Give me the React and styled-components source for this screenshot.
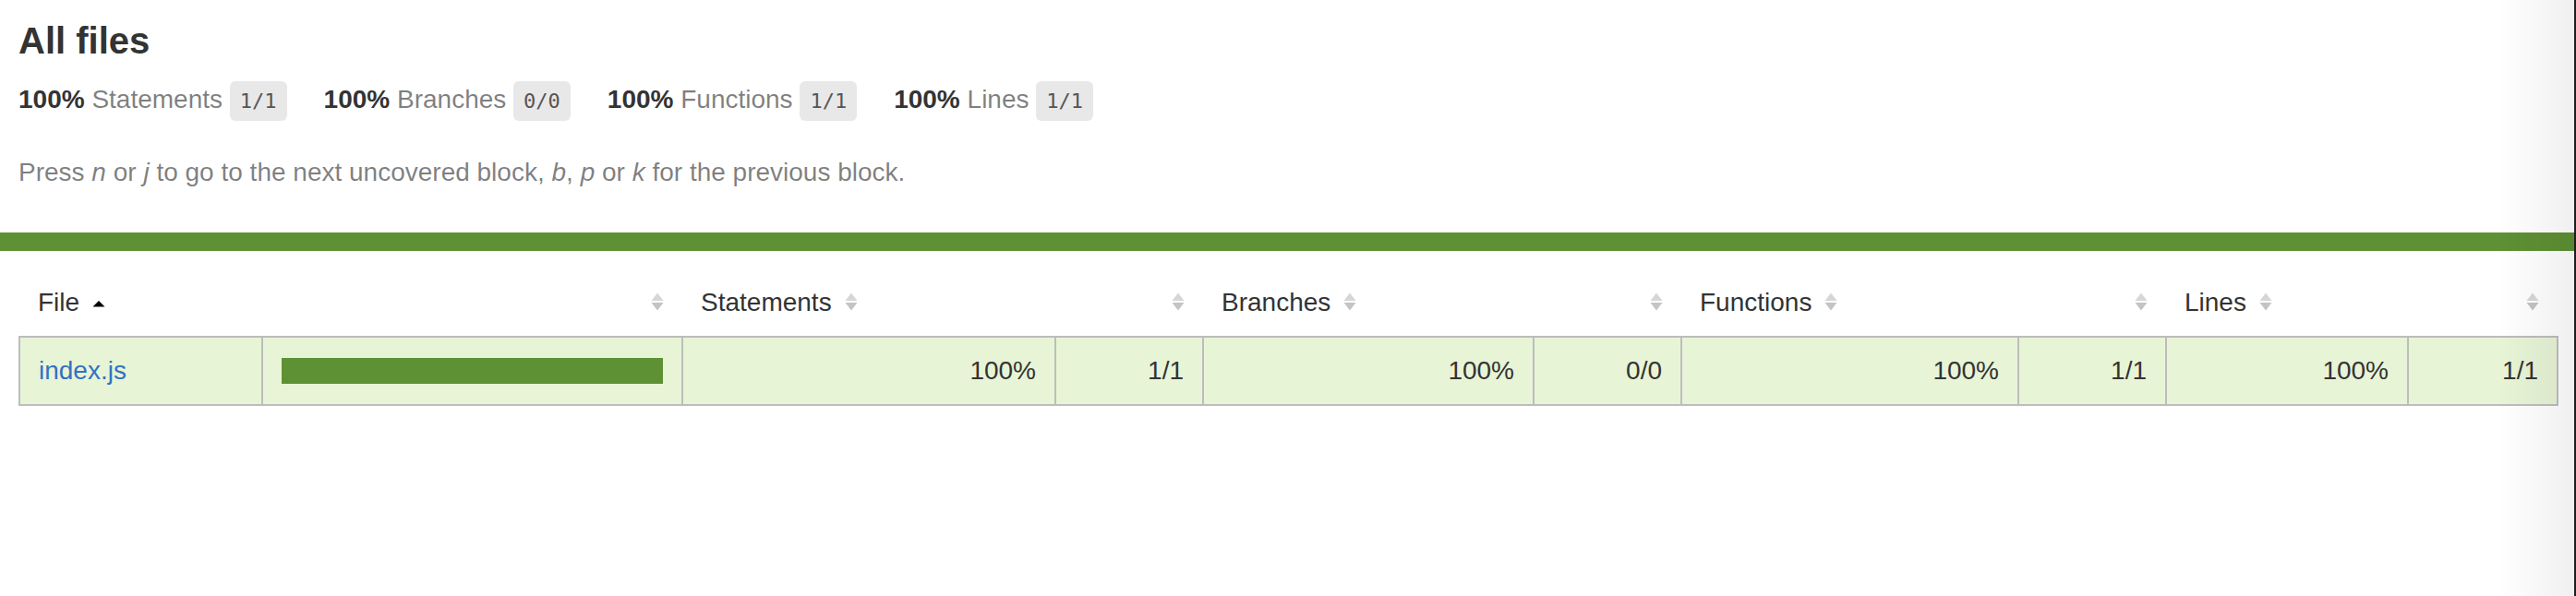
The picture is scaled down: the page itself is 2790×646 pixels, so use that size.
import React from "react";
import styled, { createGlobalStyle } from "styled-components";

const GREEN = "#5e9034";
const LIGHT = "#e8f4d6";
const LINE = "#bdbdbd";

const GlobalStyle = createGlobalStyle`
  *, *:before, *:after { box-sizing: border-box; }
  html, body { margin: 0; padding: 0; background: #fff; }
  body {
    font-family: "Liberation Sans", Arial, sans-serif;
    font-size: 28px;
    line-height: 1.2;
    color: #333;
  }
`;

const Wrapper = styled.div`
  min-height: 100vh;
`;

const Pad = styled.div`
  padding: 20px;
`;

const Title = styled.h1`
  font-size: 40px;
  line-height: 1.2;
  margin: 0;
  font-weight: bold;
`;

const StatRow = styled.div`
  display: flex;
`;

const Stat = styled.div`
  padding: 23px 40px 17px 0;
  white-space: nowrap;
`;

const Strong = styled.span`
  font-weight: bold;
`;

const Quiet = styled.span`
  color: rgba(0, 0, 0, 0.5);
`;

const Fraction = styled.span`
  display: inline-block;
  height: 43px;
  line-height: 43px;
  margin: -6px 0;
  padding: 0 11px;
  font-family: "DejaVu Sans Mono", "Liberation Mono", monospace;
  font-size: 22px;
  color: #555;
  background: #e8e8e8;
  border-radius: 6px;
  vertical-align: middle;
`;

const Hint = styled.p`
  margin: 28px 0;
  color: rgba(0, 0, 0, 0.5);
  em { font-style: italic; }
`;

const StatusLine = styled.div`
  height: 20px;
  background: ${GREEN};
`;

const Table = styled.table`
  width: 100%;
  border-collapse: collapse;
  table-layout: fixed;
  line-height: 32px;
  tbody { border: 2px solid ${LINE}; }
  tr { border-bottom: 2px solid ${LINE}; }
`;

const Col = styled.col`
  width: ${(p) => p.$w}px;
`;

const Th = styled.th`
  padding: 20px;
  font-weight: normal;
  white-space: nowrap;
  text-align: ${(p) => (p.$right ? "right" : "left")};
`;

const Td = styled.td`
  padding: 20px;
  background: ${LIGHT};
  border-right: 2px solid ${LINE};
  white-space: nowrap;
  text-align: ${(p) => (p.$right ? "right" : "left")};
  &:last-child { border-right: none; }
`;

const FileLink = styled.a`
  color: #3172c5;
  text-decoration: none;
`;

const Chart = styled.div`
  line-height: 0;
  border: 2px solid ${GREEN};
`;

const Fill = styled.div`
  height: 24px;
  background: ${GREEN};
`;

const SorterBox = styled.svg`
  display: inline-block;
  width: 14px;
  height: 20px;
  margin-left: 14px;
  vertical-align: baseline;
`;

function Sorter({ sorted }) {
  if (sorted) {
    return (
      <SorterBox viewBox="0 0 14 20">
        <polygon points="0.5,15.5 13.5,15.5 7,9" fill="#000" />
      </SorterBox>
    );
  }
  return (
    <SorterBox viewBox="0 0 14 20">
      <polygon points="7,0.5 13.5,9 0.5,9" fill="#d6d6d6" />
      <polygon points="0.5,11 13.5,11 7,19.5" fill="#c4c4c4" />
    </SorterBox>
  );
}

const Shade = styled.div`
  position: fixed;
  top: 0;
  right: 0;
  bottom: 0;
  width: 84px;
  pointer-events: none;
  background: linear-gradient(to right, rgba(0, 0, 0, 0), rgba(0, 0, 0, 0.06));
  border-right: 2px solid #1e1e1e;
`;

const stats = [
  { label: "Statements", frac: "1/1" },
  { label: "Branches", frac: "0/0" },
  { label: "Functions", frac: "1/1" },
  { label: "Lines", frac: "1/1" },
];

const widths = [263, 455, 404, 160, 358, 160, 365, 160, 262, 162];

const metrics = [
  { name: "Statements", pct: "100%", abs: "1/1" },
  { name: "Branches", pct: "100%", abs: "0/0" },
  { name: "Functions", pct: "100%", abs: "1/1" },
  { name: "Lines", pct: "100%", abs: "1/1" },
];

export default function App() {
  return (
    <Wrapper>
      <GlobalStyle />
      <Pad>
        <Title>All files</Title>
        <StatRow>
          {stats.map((s) => (
            <Stat key={s.label}>
              <Strong>100% </Strong>
              <Quiet>{s.label}</Quiet> <Fraction>{s.frac}</Fraction>
            </Stat>
          ))}
        </StatRow>
        <Hint>
          Press <em>n</em> or <em>j</em> to go to the next uncovered block, <em>b</em>,{" "}
          <em>p</em> or <em>k</em> for the previous block.
        </Hint>
      </Pad>
      <StatusLine />
      <Pad>
        <Table>
          <colgroup>
            {widths.map((w, i) => (
              <Col key={i} $w={w} />
            ))}
          </colgroup>
          <thead>
            <tr>
              <Th>
                File<Sorter sorted />
              </Th>
              <Th $right>
                <Sorter />
              </Th>
              {metrics.map((m) => (
                <React.Fragment key={m.name}>
                  <Th>
                    {m.name}
                    <Sorter />
                  </Th>
                  <Th $right>
                    <Sorter />
                  </Th>
                </React.Fragment>
              ))}
            </tr>
          </thead>
          <tbody>
            <tr>
              <Td>
                <FileLink href="#">index.js</FileLink>
              </Td>
              <Td>
                <Chart>
                  <Fill />
                </Chart>
              </Td>
              {metrics.map((m) => (
                <React.Fragment key={m.name}>
                  <Td $right>{m.pct}</Td>
                  <Td $right>{m.abs}</Td>
                </React.Fragment>
              ))}
            </tr>
          </tbody>
        </Table>
      </Pad>
      <Shade />
    </Wrapper>
  );
}
